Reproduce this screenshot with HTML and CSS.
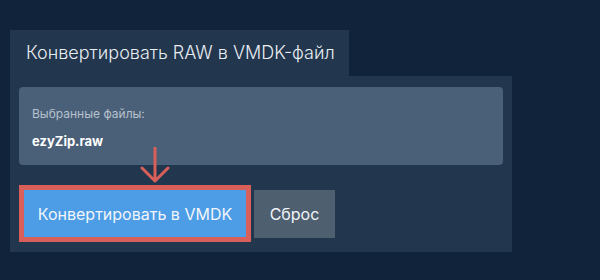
FILE: index.html
```html
<!DOCTYPE html>
<html lang="ru">
<head>
  <meta charset="UTF-8" />
  <title>Конвертировать RAW в VMDK-файл</title>
  <link rel="stylesheet" href="styles.css">
</head>
<body>
  <div class="tool">
    <div class="tool-tab">Конвертировать RAW в VMDK-файл</div>
    <div class="tool-body">
      <div class="files-box">
        <div class="files-label">Выбранные файлы:</div>
        <div class="files-name">ezyZip.raw</div>
      </div>
      <div class="actions">
        <button class="btn btn-convert">
          Конвертировать в VMDK
          <svg class="hint-arrow" width="30" height="36" viewBox="0 0 30 36">
            <path d="M15 1 V34 M2 21 L15 34 L28 21" fill="none" stroke="#d9605a" stroke-width="3" stroke-linecap="round" stroke-linejoin="round"/>
          </svg>
        </button>
        <button class="btn btn-reset">Сброс</button>
      </div>
    </div>
  </div>
</body>
</html>
```

FILE: styles.css
```css
* { box-sizing: border-box; margin: 0; padding: 0; }

body {
  font-family: Inter, 'Noto Sans', sans-serif;
  background: #10233a;
  padding: 30px 10px;
}

.tool { width: 502px; }

.tool-tab {
  display: inline-block;
  width: 339px; height: 46px;
  background: #22364d;
  color: #e8edf2;
  font-size: 18px; font-weight: 300;
  line-height: 46px;
  padding-left: 16px;
  white-space: nowrap;
  vertical-align: top;
}

.tool-body {
  background: #22364d;
  padding: 11px 9px 14px;
}

.files-box {
  background: #4a5f78;
  border-radius: 4px;
  height: 78px;
  padding: 18px 13px 0;
}
.files-label {
  font-size: 12px; color: #b7c2ce;
  line-height: 18px;
}
.files-name {
  font-size: 13px; font-weight: 700; color: #fff;
  margin-top: 9px;
  line-height: 18px;
}

.actions {
  display: flex;
  gap: 8px;
  margin-top: 25px;
  padding-left: 5px;
}

.btn {
  border: none;
  font-family: inherit;
  font-size: 16px;
  color: #f2f5f8;
  height: 47px;
  cursor: pointer;
}
.btn-convert {
  position: relative;
  width: 222px;
  background: #4c9de6;
  outline: 5px solid #d9605a;
}
.btn-reset {
  width: 81px;
  height: 48px;
  background: #4e5f70;
}

.hint-arrow {
  position: absolute;
  left: 116px; top: -43px;
}
```
